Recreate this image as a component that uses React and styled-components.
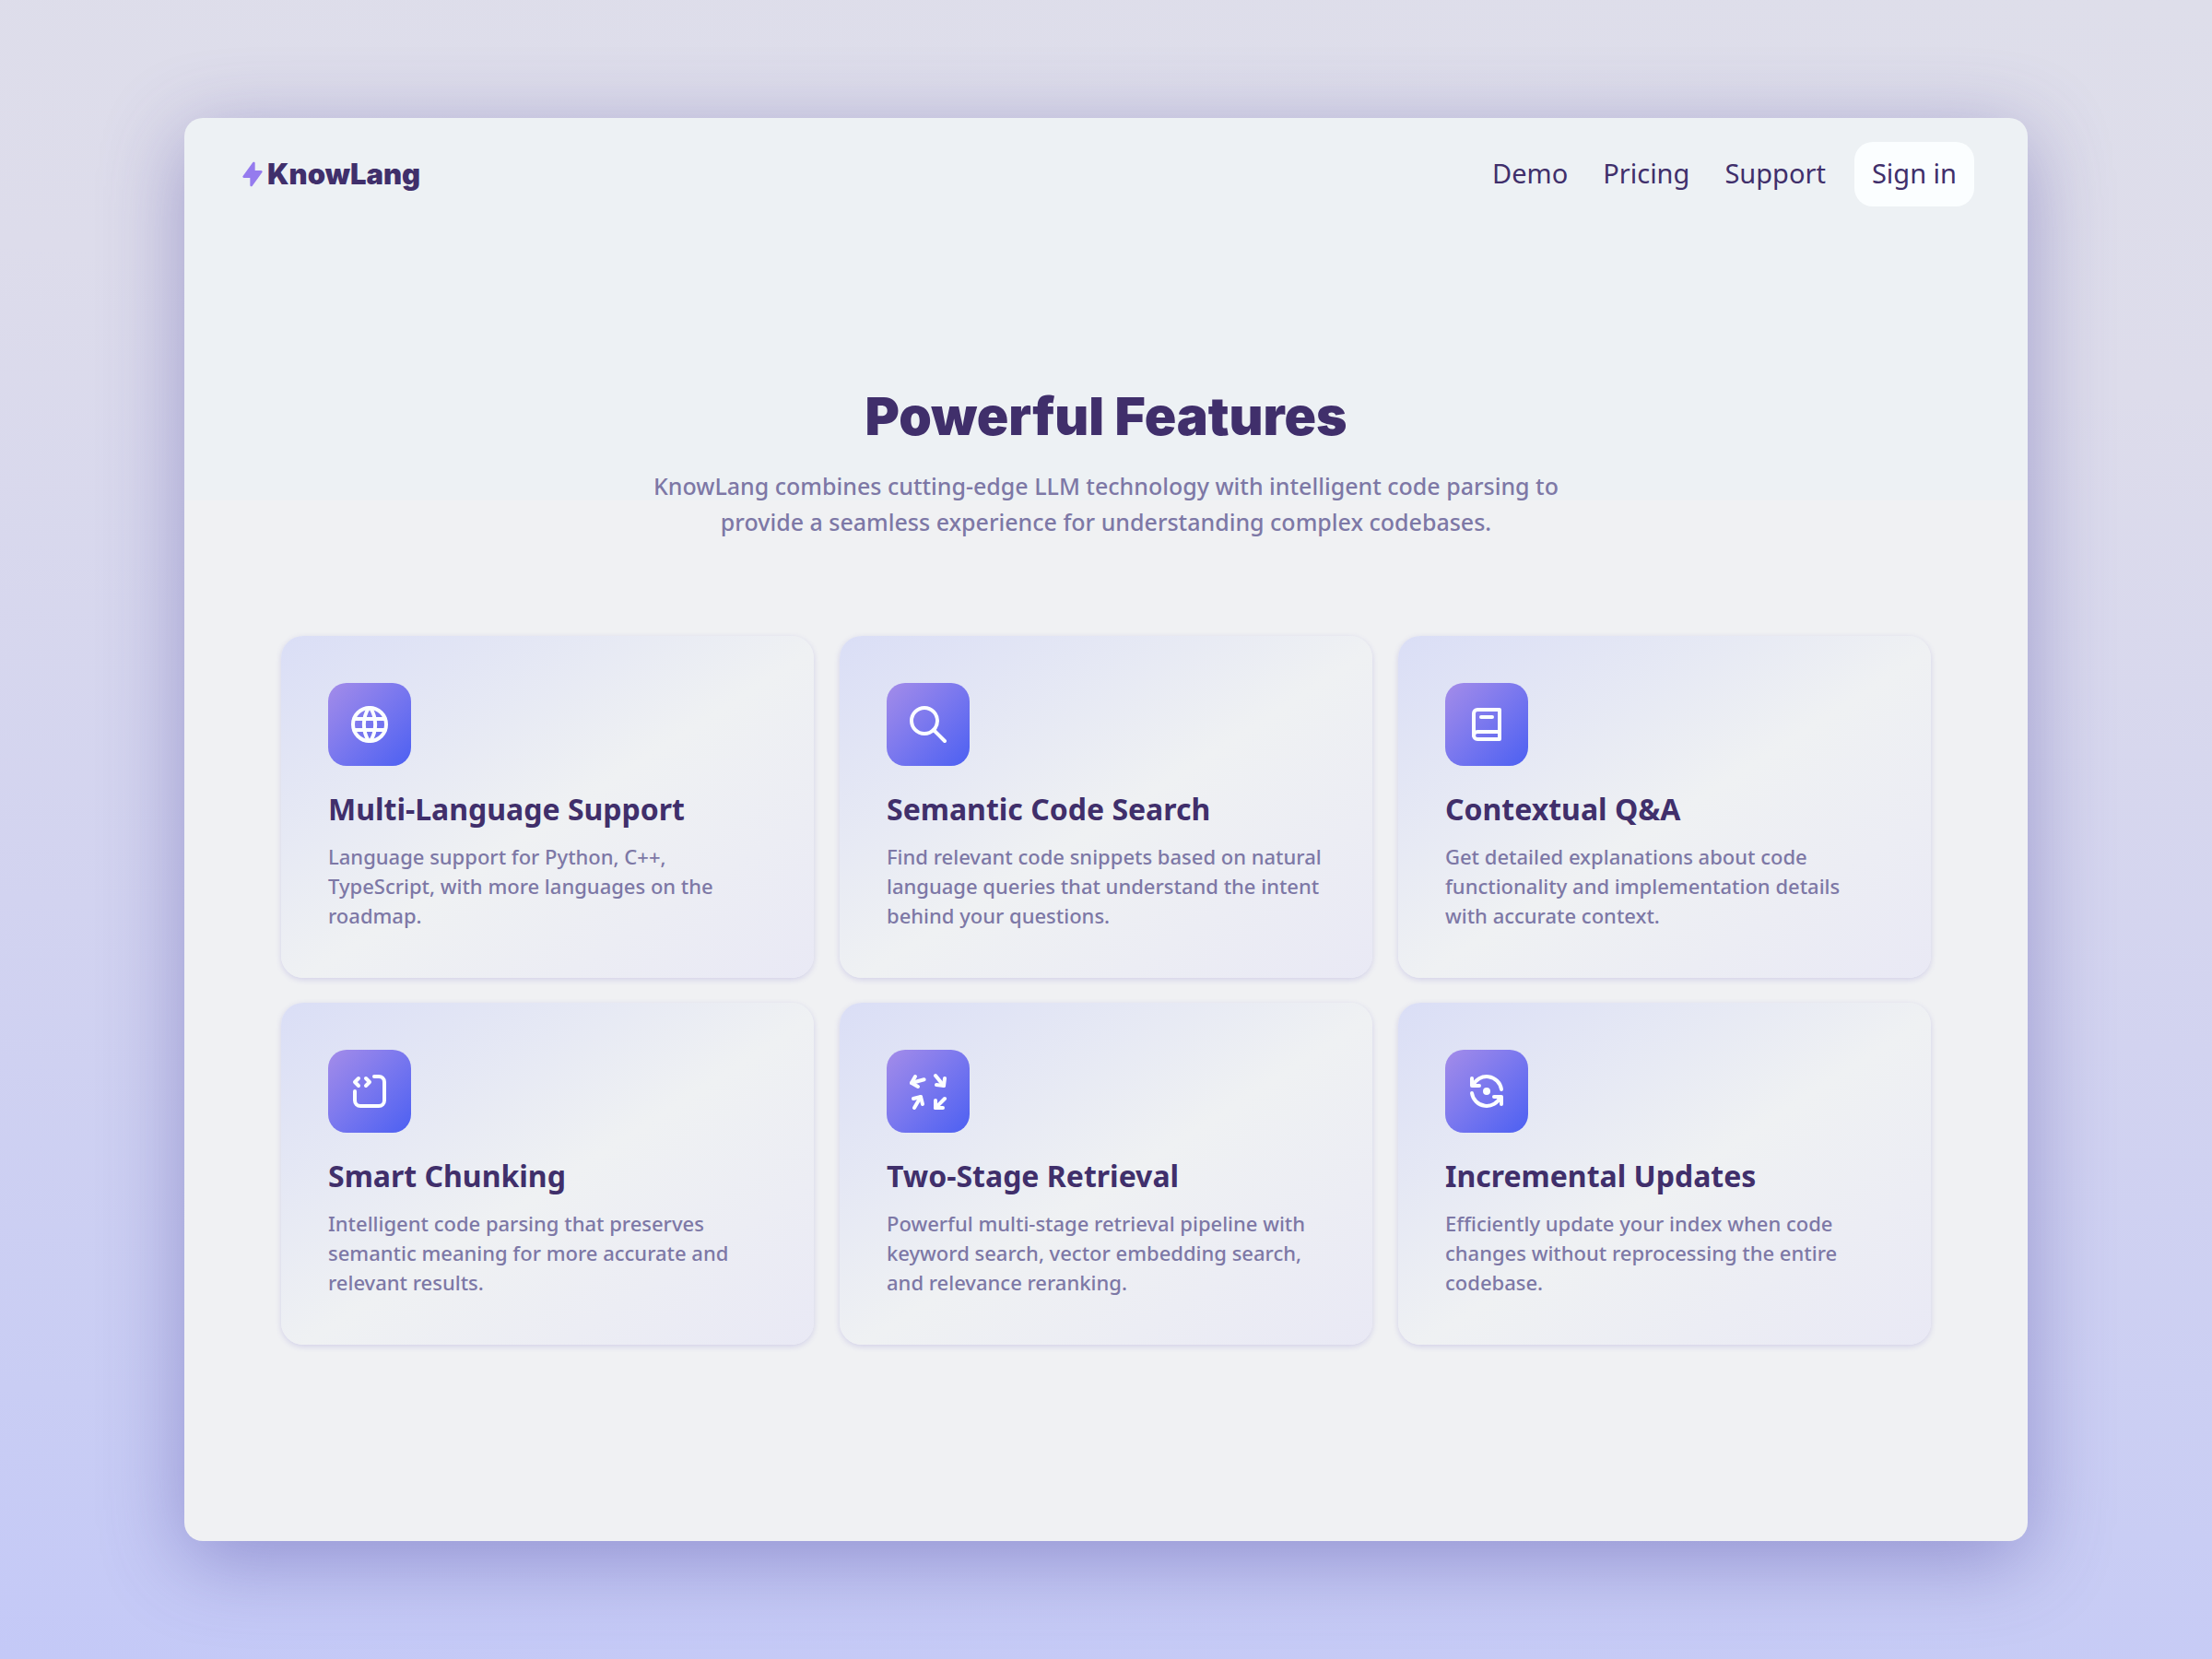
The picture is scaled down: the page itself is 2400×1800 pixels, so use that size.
import React from "react";
import styled, { createGlobalStyle } from "styled-components";
import {
  TbArrowsRandom,
  TbBoltFilled,
  TbBook2,
  TbRefreshDot,
  TbSearch,
  TbSourceCode,
  TbWorld,
} from "react-icons/tb";

const GlobalStyle = createGlobalStyle`
  *, *::before, *::after { box-sizing: border-box; }
  body {
    margin: 0;
    font-family: "Noto Sans", "Open Sans", sans-serif;
    color: #402f6b;
    background: #c9cdf4;
  }
  h1, h2, p, ul { margin: 0; padding: 0; }
  ul { list-style: none; }
`;

const Page = styled.div`
  min-height: 100vh;
  padding: 128px 24px;
  background: linear-gradient(184deg, #dedeea 0%, #dddceb 22%, #d2d3f0 58%, #c9cdf4 85%, #c4c9f7 100%);
`;

const Window = styled.div`
  max-width: 2000px;
  margin: 0 auto;
  border-radius: 20px;
  background: linear-gradient(#edf1f4, #edf1f4) 0 0 / 100% 415px no-repeat #f0f1f3;
  box-shadow: 0 20px 88px rgba(74, 68, 160, 0.43);
`;

const Header = styled.header`
  display: flex;
  align-items: center;
  justify-content: space-between;
  padding: 26px 58px;
`;

const Brand = styled.a`
  display: flex;
  align-items: center;
  color: #402f6b;
  font: 900 31px/40px Inter, sans-serif;
  text-decoration: none;

  svg {
    width: 32px;
    height: 32px;
    color: #957bee;
  }
`;

const Nav = styled.nav`
  display: flex;
  align-items: center;
`;

const NavLink = styled.a`
  padding: 14px 19px 16px;
  color: #402f6b;
  font-size: 29px;
  line-height: 40px;
  text-decoration: none;
`;

const SignInLink = styled(NavLink)`
  margin-left: 12px;
  border-radius: 20px;
  background: #fbfeff;
`;

const Features = styled.main`
  max-width: 1838px;
  margin: 0 auto;
  padding: 162px 24px 213px;
`;

const Intro = styled.div`
  max-width: 1040px;
  margin: 0 auto;
  text-align: center;
`;

const Title = styled.h1`
  font: 900 57px/80px Inter, sans-serif;
`;

const Lead = styled.p`
  margin-top: 16px;
  color: #7d78a6;
  font-size: 25px;
  font-weight: 500;
  line-height: 39px;
`;

const Grid = styled.ul`
  display: grid;
  grid-template-columns: repeat(3, 1fr);
  gap: 27px 28px;
  margin-top: 104px;
`;

const Card = styled.li`
  padding: 51px 51px 52px;
  border-radius: 24px;
  background: linear-gradient(to bottom right, #dadef6 0%, #eff1f3 52%, #e9e9f5 100%);
  box-shadow: 0 2px 6px rgba(90, 80, 190, 0.2);
`;

const IconTile = styled.div`
  display: grid;
  place-items: center;
  width: 90px;
  height: 90px;
  border-radius: 20px;
  background: linear-gradient(135deg, #a48ce9 0%, #7d79ee 45%, #4c60f2 100%);
  color: #fbfeff;

  svg {
    width: 48px;
    height: 48px;
  }
`;

const CardTitle = styled.h2`
  margin-top: 26px;
  font-size: 32px;
  font-weight: 700;
  line-height: 42px;
`;

const CardText = styled.p`
  margin-top: 14px;
  color: #7d78a6;
  font-size: 22px;
  font-weight: 500;
  line-height: 32px;
`;

const features = [
  {
    icon: TbWorld,
    title: "Multi-Language Support",
    text: "Language support for Python, C++, TypeScript, with more languages on the roadmap.",
  },
  {
    icon: TbSearch,
    title: "Semantic Code Search",
    text: "Find relevant code snippets based on natural language queries that understand the intent behind your questions.",
  },
  {
    icon: TbBook2,
    title: "Contextual Q&A",
    text: "Get detailed explanations about code functionality and implementation details with accurate context.",
  },
  {
    icon: TbSourceCode,
    title: "Smart Chunking",
    text: "Intelligent code parsing that preserves semantic meaning for more accurate and relevant results.",
  },
  {
    icon: TbArrowsRandom,
    title: "Two-Stage Retrieval",
    text: "Powerful multi-stage retrieval pipeline with keyword search, vector embedding search, and relevance reranking.",
  },
  {
    icon: TbRefreshDot,
    title: "Incremental Updates",
    text: "Efficiently update your index when code changes without reprocessing the entire codebase.",
  },
];

export default function App() {
  return (
    <>
      <GlobalStyle />
      <Page>
        <Window>
          <Header>
            <Brand href="#">
              <TbBoltFilled aria-hidden="true" />
              KnowLang
            </Brand>
            <Nav>
              <NavLink href="#demo">Demo</NavLink>
              <NavLink href="#pricing">Pricing</NavLink>
              <NavLink href="#support">Support</NavLink>
              <SignInLink href="#sign-in">Sign in</SignInLink>
            </Nav>
          </Header>
          <Features>
            <Intro>
              <Title>Powerful Features</Title>
              <Lead>
                KnowLang combines cutting-edge LLM technology with intelligent code parsing to
                provide a seamless experience for understanding complex codebases.
              </Lead>
            </Intro>
            <Grid>
              {features.map(({ icon: Icon, title, text }) => (
                <Card key={title}>
                  <IconTile>
                    <Icon aria-hidden="true" />
                  </IconTile>
                  <CardTitle>{title}</CardTitle>
                  <CardText>{text}</CardText>
                </Card>
              ))}
            </Grid>
          </Features>
        </Window>
      </Page>
    </>
  );
}
